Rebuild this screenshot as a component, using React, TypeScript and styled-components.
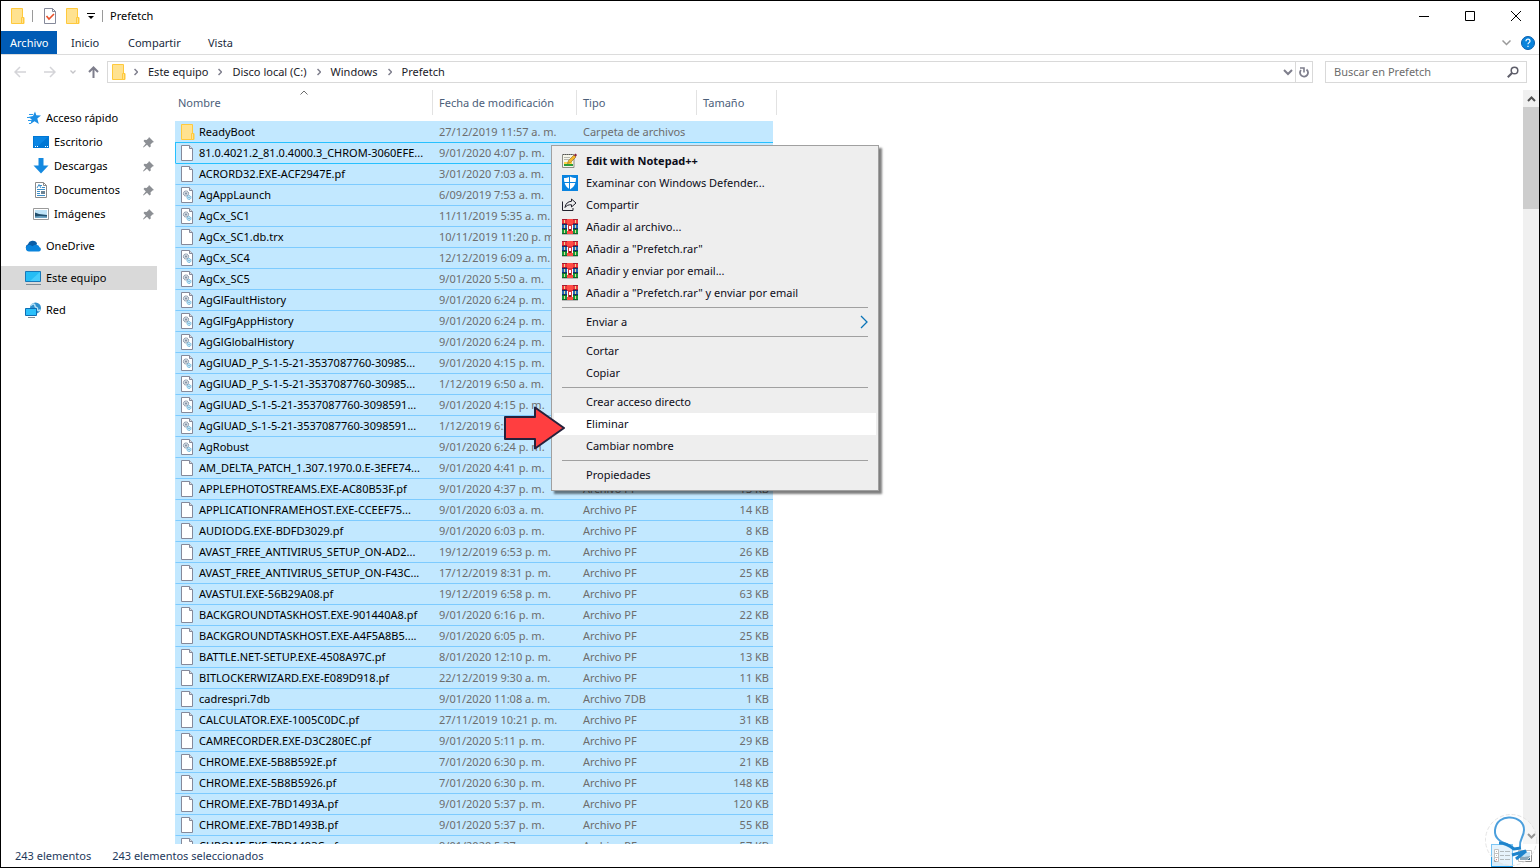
import React from "react";
import styled, { createGlobalStyle } from "styled-components";

const GlobalStyle = createGlobalStyle`
  * { box-sizing: border-box; }
  body { margin: 0; background: #fff; }
  body, button, input, table {
    font-family: "Noto Sans", "Open Sans", sans-serif;
    font-size: 11px;
    line-height: 16px;
  }
  button { border: 0; padding: 0; background: none; color: inherit; text-align: left; }
  a { color: inherit; text-decoration: none; }
  svg { display: block; flex: none; }
`;

const Window = styled.div`
  position: relative;
  display: flex;
  flex-direction: column;
  height: 100vh;
  border: 1px solid #000;
  overflow: hidden;
  color: #000;
`;

/* ---------- title bar ---------- */
const TitleBar = styled.header`
  display: flex;
  align-items: center;
  height: 30px;
  flex: none;
  padding-left: 10px;
`;
const QuickTools = styled.div`
  display: flex;
  align-items: center;
`;
const ToolDivider = styled.span`
  width: 1px;
  height: 12px;
  margin: 0 7px;
  background: #9a9a9a;
`;
const ToolButton = styled.button<{ $before?: number; $after?: number }>`
  display: flex;
  margin-left: ${(p) => p.$before ?? 0}px;
  margin-right: ${(p) => p.$after ?? 0}px;
`;
const Title = styled.h1`
  margin: 0;
  flex: 1;
  font-size: 11px;
  font-weight: 400;
`;
const WindowButton = styled.button`
  display: grid;
  place-items: center;
  width: 46px;
  height: 30px;
`;

/* ---------- ribbon tabs ---------- */
const TabBar = styled.nav`
  display: flex;
  align-items: stretch;
  height: 24px;
  flex: none;
  border-bottom: 1px solid #dcdcdc;
  padding-right: 4px;
`;
const Tab = styled.button<{ $active?: boolean; $width: number }>`
  width: ${(p) => p.$width}px;
  padding-left: ${(p) => (p.$active ? 9 : 14)}px;
  background: ${(p) => (p.$active ? "#005bb5" : "transparent")};
  color: ${(p) => (p.$active ? "#fff" : "#202a3c")};
`;
const TabTools = styled.div`
  display: flex;
  align-items: center;
  gap: 10px;
  margin-left: auto;
`;

/* ---------- address row ---------- */
const AddressRow = styled.div`
  display: flex;
  align-items: center;
  gap: 12px;
  height: 34px;
  margin-bottom: 1px;
  flex: none;
  padding: 0 12px 0 13px;
`;
const NavButtons = styled.div`
  display: flex;
  align-items: center;
  width: 81px;
`;
const NavButton = styled.button<{ $gap?: number }>`
  display: flex;
  margin-right: ${(p) => p.$gap ?? 0}px;
`;
const AddressBox = styled.div`
  display: flex;
  align-items: center;
  flex: 1;
  height: 22px;
  border: 1px solid #d9d9d9;
  padding-left: 4px;
`;
const Crumbs = styled.ol`
  display: flex;
  align-items: center;
  flex: 1;
  margin: 0;
  padding: 0 0 0 8px;
  list-style: none;
`;
const Crumb = styled.li`
  display: flex;
  align-items: center;
  color: #1a1a28;
  svg { margin: 0 10px; }
  &:first-child svg { margin-left: 0; }
`;
const RefreshButton = styled.button`
  display: grid;
  place-items: center;
  width: 17px;
  height: 20px;
  margin-left: 2px;
  border-left: 1px solid #d9d9d9;
`;
const SearchBox = styled.label`
  display: flex;
  align-items: center;
  width: 202px;
  height: 22px;
  border: 1px solid #d9d9d9;
  padding: 0 7px 0 8px;
`;
const SearchInput = styled.input`
  flex: 1;
  min-width: 0;
  height: 16px;
  border: 0;
  padding: 0;
  outline: 0;
  background: none;
  &::placeholder { color: #6d6d6d; opacity: 1; }
`;

/* ---------- body ---------- */
const Body = styled.main`
  display: flex;
  flex: 1;
  min-height: 0;
  overflow: hidden;
`;
const Sidebar = styled.nav`
  width: 174px;
  flex: none;
  padding: 16px 18px 0 0;
`;
const SideGroup = styled.ul`
  margin: 0 0 8px;
  padding: 0;
  list-style: none;
`;
const SideLink = styled.a<{ $nested?: boolean; $selected?: boolean }>`
  display: flex;
  align-items: center;
  height: 24px;
  padding: 0 3px 0 ${(p) => (p.$nested ? 32 : 24)}px;
  background: ${(p) => (p.$selected ? "#d9d9d9" : "transparent")};
`;
const SideIcon = styled.span`
  width: 21px;
`;
const SideLabel = styled.span`
  flex: 1;
`;

const FilePane = styled.section`
  flex: 1;
  min-width: 0;
  overflow: hidden;
`;
const FileTable = styled.table`
  width: 602px;
  table-layout: fixed;
  border-spacing: 0;
`;
const HeadCell = styled.th`
  position: relative;
  padding: 0 0 6px;
  font-weight: 400;
  text-align: left;
  color: #4c607a;
`;
const HeadButton = styled.button<{ $first?: boolean }>`
  display: block;
  width: 100%;
  height: 25px;
  padding-left: ${(p) => (p.$first ? 3 : 6)}px;
  border-right: 1px solid #e2e2e2;
`;
const SortMark = styled.span`
  position: absolute;
  top: 0;
  left: 50%;
  transform: translateX(-50%);
`;
const Row = styled.tr<{ $focus?: boolean; $afterFocus?: boolean; $plain?: boolean }>`
  td {
    border-top: 1px solid
      ${(p) => (p.$focus || p.$afterFocus ? "#26c0ff" : p.$plain ? "#c2e8ff" : "#7dcbff")};
  }
  td:first-child { border-left: 1px solid ${(p) => (p.$focus ? "#26c0ff" : "#c2e8ff")}; }
`;
const Cell = styled.td<{ $right?: boolean }>`
  height: 21px;
  padding: ${(p) => (p.$right ? "0 4px 0 0" : "0 0 0 6px")};
  background: #c2e8ff;
  color: #6d6d6d;
  line-height: 20px;
  white-space: nowrap;
  text-align: ${(p) => (p.$right ? "right" : "left")};
`;
const NameCell = styled(Cell)`
  padding-left: 5px;
  color: #000;
`;
const FileName = styled.div`
  display: grid;
  grid-template-columns: 18px 1fr;
  align-items: center;
  height: 20px;
`;

const ScrollTrack = styled.div`
  display: flex;
  flex-direction: column;
  width: 16px;
  flex: none;
  background: #f0f0f0;
`;
const ScrollButton = styled.button`
  display: grid;
  place-items: center;
  height: 17px;
  flex: none;
`;
const ScrollThumb = styled.div`
  height: 102px;
  background: #cdcdcd;
`;
const ScrollSpace = styled.div`
  flex: 1;
`;

const StatusBar = styled.footer`
  display: flex;
  align-items: center;
  gap: 21px;
  height: 23px;
  flex: none;
  padding: 0 7px 0 14px;
  color: #1e395b;
`;
const ViewButtons = styled.div`
  display: flex;
  align-items: center;
  gap: 4px;
  height: 23px;
  margin-left: auto;
`;
const ViewButton = styled.button<{ $active?: boolean }>`
  display: grid;
  place-items: center;
  width: ${(p) => (p.$active ? 22 : 15)}px;
  height: 23px;
  background: ${(p) => (p.$active ? "#d5ecfa" : "transparent")};
  box-shadow: ${(p) => (p.$active ? "inset 0 0 0 1px #26a0ee" : "none")};
`;

/* ---------- overlays ---------- */
const Menu = styled.div`
  position: absolute;
  top: 144px;
  left: 550px;
  width: 328px;
  padding: 4px 2px;
  border: 1px solid #a0a0a0;
  background: #eee;
  box-shadow: 3px 3px 2px rgba(0, 0, 0, 0.5);
`;
const MenuItem = styled.button<{ $bold?: boolean; $hot?: boolean }>`
  display: grid;
  grid-template-columns: 24px 1fr auto;
  align-items: center;
  width: 100%;
  height: 22px;
  padding: 0 8px;
  background: ${(p) => (p.$hot ? "#fff" : "transparent")};
  font-weight: ${(p) => (p.$bold ? 700 : 400)};
  color: #0c0c18;
`;
const MenuLine = styled.hr`
  height: 1px;
  margin: 3px 8px;
  border: 0;
  background: #a0a0a0;
`;
const Pointer = styled.div`
  position: absolute;
  top: 404px;
  left: 501px;
`;
const Mascot = styled.div`
  position: absolute;
  right: 2px;
  bottom: 0;
`;

/* ---------- icons ---------- */
const FolderIcon = () => (
  <svg width="14" height="16" viewBox="0 0 14 16">
    <path d="M.5.5h11v9h1.500v6H.5z" fill="#ffe290" stroke="#ffc93c" />
    <path d="M10.500 9.500h2v6h-2z" fill="#ffe290" stroke="#ffc93c" />
  </svg>
);
const PageIcon = ({ gears }: { gears?: boolean }) => (
  <svg width="12" height="16" viewBox="0 0 12 16">
    <path d="M.5.5h8l3 3v12H.5z" fill="#fff" stroke="#85899a" />
    <path d="M8.500.5v3h3" fill="#d8dbe2" stroke="#85899a" />
    {gears && (
      <>
        <circle cx="5" cy="6.500" r="2.600" fill="#d3dae2" stroke="#76869a" strokeDasharray="1.200 .4" />
        <circle cx="5" cy="6.500" r="1" fill="#7e8da0" />
        <circle cx="8" cy="10.500" r="2" fill="#cdeaf8" stroke="#5cb0dc" strokeDasharray="1.200 .4" />
        <circle cx="8" cy="10.500" r=".7" fill="#5c9cc4" />
      </>
    )}
  </svg>
);
const Chevron = ({ d, w, h, c, s = 1 }: { d: string; w: number; h: number; c: string; s?: number }) => (
  <svg width={w} height={h} viewBox={`0 0 ${w} ${h}`}>
    <path d={d} fill="none" stroke={c} strokeWidth={s} />
  </svg>
);
const CheckPageIcon = () => (
  <svg width="12" height="16" viewBox="0 0 12 16">
    <path d="M.5.5h8l3 3v12H.5z" fill="#fff" stroke="#85899a" />
    <path d="M8.500.5v3h3" fill="none" stroke="#85899a" />
    <path d="M2.500 8l2.500 3 5-5" fill="none" stroke="#e8502a" strokeWidth="1.600" />
  </svg>
);
const StarIcon = () => (
  <svg width="17" height="16" viewBox="0 0 17 16">
    <path d="M10 1.500l1.300 3.800 4.700.2-3.700 3 1.500 5.500-4.300-2.700L5.500 14l1.200-4.500L3.500 7 8 6z" fill="#1c8ee4" />
    <path d="M4 4.500h4M2 7.500h4M3 10.500h4M4 13.500h2" stroke="#2c9cec" />
  </svg>
);
const DesktopIcon = () => (
  <svg width="16" height="14" viewBox="0 0 16 14">
    <path d="M0 1h16v12H0z" fill="#0077d4" />
    <path d="M1 2h14L5 11H1z" fill="#0a86e4" />
    <path d="M2 11.500h1M4 11.500h1M12 11.500h1M14 11.500h1" stroke="#fff" />
  </svg>
);
const DownloadIcon = () => (
  <svg width="16" height="16" viewBox="0 0 16 16">
    <path d="M5.500 0h5v7.500h5L8 15.500.5 7.500h5z" fill="#1489e0" />
  </svg>
);
const DocumentIcon = () => (
  <svg width="16" height="16" viewBox="0 0 16 16">
    <path d="M2.500.5h8l3 3v12h-11z" fill="#fff" stroke="#8a8a8a" />
    <path d="M10.500.5v3h3" fill="none" stroke="#8a8a8a" />
    <path d="M4 6l2-3.500L8 6M7 3.500h2M9 5.500h3M4 7.500h8M4 9.500h3M4 11.500h3M4 13.500h8" fill="none" stroke="#3b8ec9" />
    <path d="M8 9h4v3H8z" fill="#6d8494" />
  </svg>
);
const PictureIcon = () => (
  <svg width="16" height="14" viewBox="0 0 16 14">
    <path d="M.5 1.500h15v11H.5z" fill="#fff" stroke="#9a9a9a" />
    <path d="M2 3h12v8H2z" fill="#bfe4f8" />
    <path d="M2 5.500l4 1.500 8 1v3H2z" fill="#22506e" />
    <path d="M2 9.500l5-.5 7 .5V11H2z" fill="#6fa5c4" />
  </svg>
);
const CloudIcon = () => (
  <svg width="17" height="12" viewBox="0 0 17 12">
    <path d="M3.500 11A3.500 3.500 0 013 4.300 5 5 0 0112 3l-2 8z" fill="#0a5ea8" />
    <path d="M4 11.500a3.300 3.300 0 01-.5-6.500c1.500-.3 2.800.3 4 1.300C9 5 10 4.600 11.500 4.700a3.500 3.500 0 013 2.600 2.200 2.200 0 01-.3 4.200z" fill="#0a84dc" />
  </svg>
);
const ComputerIcon = () => (
  <svg width="17" height="16" viewBox="0 0 17 16">
    <path d="M.5 1.500h15v10H.5z" fill="#25bdf5" stroke="#1878b8" />
    <path d="M15 2v9H5z" fill="#45cdfc" />
    <path d="M1 14.500h15" stroke="#7e8a94" />
  </svg>
);
const NetworkIcon = () => (
  <svg width="17" height="16" viewBox="0 0 17 16">
    <circle cx="10.500" cy="6" r="5.500" fill="#2f8fcc" />
    <path d="M6 3.500C8 1 10 2 10 4s3 1 2.500 3 2 2 2.500.5" fill="none" stroke="#b8e2f6" strokeWidth="1.600" />
    <path d="M.5 6.500h11v7H.5z" fill="#2bc0fa" stroke="#0d6db4" />
    <path d="M3 15.500h7" stroke="#7e8a94" />
  </svg>
);
const PinIcon = () => (
  <svg width="11" height="11" viewBox="0 0 11 11">
    <path d="M6 0l5 5-1.500.5-2 2 .3 2L6.500 10.500 4 7.800.5 10.500 0 10l2.800-3.500L.5 4l1-1.200 2 .3 2-1.800z" fill="#8c8f94" />
  </svg>
);
const NotepadIcon = () => (
  <svg width="16" height="16" viewBox="0 0 16 16">
    <path d="M.5 1.500h11.500v13H.5z" fill="#f6f6ea" stroke="#8c8c84" />
    <path d="M1 1.500h10" stroke="#555" strokeDasharray="1 1" />
    <path d="M2 4.500h6M2 6.500h5" stroke="#b8b8b0" />
    <path d="M2 9h8v2H2z" fill="#ffd34a" />
    <path d="M2 11h9v2H2z" fill="#2d9c3a" />
    <path d="M5.500 10.500l1-3L12 2l2 2L8.500 9.500z" fill="#f4b52c" stroke="#8a6a1c" strokeWidth=".6" />
    <path d="M12 2L13.500.5 15 2l-1.300 1.800z" fill="#8c2440" />
  </svg>
);
const DefenderIcon = () => (
  <svg width="16" height="16" viewBox="0 0 16 16">
    <path d="M0 0h16v16H0z" fill="#0a84e0" />
    <path d="M8 1.500c2 1.300 4 1.600 6 1.600 0 5-1.300 8.800-6 11.400C3.300 11.900 2 8.100 2 3.100c2 0 4-.3 6-1.600z" fill="#fff" />
    <path d="M7.500 1v14M2 7.500h12" stroke="#0a84e0" />
  </svg>
);
const ShareIcon = () => (
  <svg width="16" height="14" viewBox="0 0 16 14">
    <path d="M.5 3.500v9h10.500v-2.500" fill="none" stroke="#20202c" />
    <path d="M9.500 1L14 5 9.500 9V6.800C6.500 6.500 4.500 7.500 3 9.500 3.500 5.500 6 3.500 9.500 3.300z" fill="none" stroke="#20202c" />
  </svg>
);
const RarIcon = () => (
  <svg width="16" height="16" viewBox="0 0 16 16" shapeRendering="crispEdges">
    <path d="M0 0h16v5H0z" fill="#a81c30" />
    <path d="M0 1h16v3H0z" fill="#f0363c" />
    <path d="M0 5h16v5H0z" fill="#10306e" />
    <path d="M0 6h16v3H0z" fill="#2468b4" />
    <path d="M0 10h16v5H0z" fill="#0c6a28" />
    <path d="M0 11h16v3H0z" fill="#149a3a" />
    <path d="M0 15.500h16" stroke="#b8b8b8" />
    <path d="M2.500 1v3M2.500 6v3M2.500 11v3M13.500 1v3M13.500 6v3M13.500 11v3" stroke="#e8d890" />
    <path d="M5 0h6v5H5zM5 12h6v3H5z" fill="#ff4a44" />
    <path d="M5 5h6v7H5z" fill="#d8323a" />
    <path d="M5.500 6v6M10.500 6v6" stroke="#fff" />
    <path d="M7 7h2v3H7z" fill="#fff" />
    <path d="M7 10h2v2H7z" fill="#7a2020" />
  </svg>
);

/* ---------- data ---------- */
type Entry = [name: string, date: string, type?: string, size?: string];
const PF = "Archivo PF";
const files: Entry[] = [
  ["ReadyBoot", "27/12/2019 11:57 a. m.", "Carpeta de archivos"],
  ["81.0.4021.2_81.0.4000.3_CHROM-3060EFE...", "9/01/2020 4:07 p. m."],
  ["ACRORD32.EXE-ACF2947E.pf", "3/01/2020 7:03 a. m."],
  ["AgAppLaunch", "6/09/2019 7:53 a. m."],
  ["AgCx_SC1", "11/11/2019 5:35 a. m."],
  ["AgCx_SC1.db.trx", "10/11/2019 11:20 p. m."],
  ["AgCx_SC4", "12/12/2019 6:09 a. m."],
  ["AgCx_SC5", "9/01/2020 5:50 a. m."],
  ["AgGlFaultHistory", "9/01/2020 6:24 p. m."],
  ["AgGlFgAppHistory", "9/01/2020 6:24 p. m."],
  ["AgGlGlobalHistory", "9/01/2020 6:24 p. m."],
  ["AgGlUAD_P_S-1-5-21-3537087760-30985...", "9/01/2020 4:15 p. m."],
  ["AgGlUAD_P_S-1-5-21-3537087760-30985...", "1/12/2019 6:50 a. m."],
  ["AgGlUAD_S-1-5-21-3537087760-3098591...", "9/01/2020 4:15 p. m."],
  ["AgGlUAD_S-1-5-21-3537087760-3098591...", "1/12/2019 6:50 a. m."],
  ["AgRobust", "9/01/2020 6:24 p. m."],
  ["AM_DELTA_PATCH_1.307.1970.0.E-3EFE74...", "9/01/2020 4:41 p. m."],
  ["APPLEPHOTOSTREAMS.EXE-AC80B53F.pf", "9/01/2020 4:37 p. m.", PF, "13 KB"],
  ["APPLICATIONFRAMEHOST.EXE-CCEEF75...", "9/01/2020 6:03 a. m.", PF, "14 KB"],
  ["AUDIODG.EXE-BDFD3029.pf", "9/01/2020 6:03 p. m.", PF, "8 KB"],
  ["AVAST_FREE_ANTIVIRUS_SETUP_ON-AD2...", "19/12/2019 6:53 p. m.", PF, "26 KB"],
  ["AVAST_FREE_ANTIVIRUS_SETUP_ON-F43C...", "17/12/2019 8:31 p. m.", PF, "25 KB"],
  ["AVASTUI.EXE-56B29A08.pf", "19/12/2019 6:58 p. m.", PF, "63 KB"],
  ["BACKGROUNDTASKHOST.EXE-901440A8.pf", "9/01/2020 6:16 p. m.", PF, "22 KB"],
  ["BACKGROUNDTASKHOST.EXE-A4F5A8B5....", "9/01/2020 6:05 p. m.", PF, "25 KB"],
  ["BATTLE.NET-SETUP.EXE-4508A97C.pf", "8/01/2020 12:10 p. m.", PF, "13 KB"],
  ["BITLOCKERWIZARD.EXE-E089D918.pf", "22/12/2019 9:30 a. m.", PF, "11 KB"],
  ["cadrespri.7db", "9/01/2020 11:08 a. m.", "Archivo 7DB", "1 KB"],
  ["CALCULATOR.EXE-1005C0DC.pf", "27/11/2019 10:21 p. m.", PF, "31 KB"],
  ["CAMRECORDER.EXE-D3C280EC.pf", "9/01/2020 5:11 p. m.", PF, "29 KB"],
  ["CHROME.EXE-5B8B592E.pf", "7/01/2020 6:30 p. m.", PF, "21 KB"],
  ["CHROME.EXE-5B8B5926.pf", "7/01/2020 6:30 p. m.", PF, "148 KB"],
  ["CHROME.EXE-7BD1493A.pf", "9/01/2020 5:37 p. m.", PF, "120 KB"],
  ["CHROME.EXE-7BD1493B.pf", "9/01/2020 5:37 p. m.", PF, "55 KB"],
  ["CHROME.EXE-7BD1493C.pf", "9/01/2020 5:37 p. m.", PF, "57 KB"],
];

const sideGroups = [
  [
    { label: "Acceso rápido", icon: <StarIcon /> },
    { label: "Escritorio", icon: <DesktopIcon />, nested: true },
    { label: "Descargas", icon: <DownloadIcon />, nested: true },
    { label: "Documentos", icon: <DocumentIcon />, nested: true },
    { label: "Imágenes", icon: <PictureIcon />, nested: true },
  ],
  [{ label: "OneDrive", icon: <CloudIcon /> }],
  [{ label: "Este equipo", icon: <ComputerIcon />, selected: true }],
  [{ label: "Red", icon: <NetworkIcon /> }],
] as { label: string; icon: React.ReactNode; nested?: boolean; selected?: boolean }[][];

const menuGroups: { label: string; icon?: React.ReactNode; bold?: boolean; hot?: boolean; sub?: boolean }[][] = [
  [
    { label: "Edit with Notepad++", icon: <NotepadIcon />, bold: true },
    { label: "Examinar con Windows Defender...", icon: <DefenderIcon /> },
    { label: "Compartir", icon: <ShareIcon /> },
    { label: "Añadir al archivo...", icon: <RarIcon /> },
    { label: 'Añadir a "Prefetch.rar"', icon: <RarIcon /> },
    { label: "Añadir y enviar por email...", icon: <RarIcon /> },
    { label: 'Añadir a "Prefetch.rar" y enviar por email', icon: <RarIcon /> },
  ],
  [{ label: "Enviar a", sub: true }],
  [{ label: "Cortar" }, { label: "Copiar" }],
  [{ label: "Crear acceso directo" }, { label: "Eliminar", hot: true }, { label: "Cambiar nombre" }],
  [{ label: "Propiedades" }],
];

const hasGears = (name: string) => name.startsWith("Ag") && !name.endsWith(".trx");

export default function App() {
  return (
    <Window>
      <GlobalStyle />
      <TitleBar>
        <QuickTools>
          <FolderIcon />
          <ToolDivider />
          <ToolButton $before={4} $after={10} aria-label="Propiedades"><CheckPageIcon /></ToolButton>
          <ToolButton $after={7} aria-label="Nueva carpeta"><FolderIcon /></ToolButton>
          <ToolButton aria-label="Personalizar">
            <svg width="8" height="6" viewBox="0 0 8 6">
              <path d="M0 .5h8" stroke="#000" />
              <path d="M1 3h6L4 6z" />
            </svg>
          </ToolButton>
          <ToolDivider />
        </QuickTools>
        <Title>Prefetch</Title>
        <WindowButton aria-label="Minimizar">
          <svg width="10" height="10"><path d="M0 5.500h10" stroke="#000" /></svg>
        </WindowButton>
        <WindowButton aria-label="Maximizar">
          <svg width="10" height="10"><path d="M.5.5h9v9h-9z" fill="none" stroke="#000" /></svg>
        </WindowButton>
        <WindowButton aria-label="Cerrar">
          <svg width="10" height="10"><path d="M0 0l10 10M10 0L0 10" stroke="#000" /></svg>
        </WindowButton>
      </TitleBar>

      <TabBar>
        <Tab $active $width={56}>Archivo</Tab>
        <Tab $width={57}>Inicio</Tab>
        <Tab $width={80}>Compartir</Tab>
        <Tab $width={55}>Vista</Tab>
        <TabTools>
          <Chevron d="M.5.5L4.500 4.500 8.500.5" w={9} h={6} c="#9a9a9a" s={1.5} />
          <ToolButton aria-label="Ayuda">
            <svg width="14" height="14" viewBox="0 0 14 14">
              <circle cx="7" cy="7" r="6.500" fill="#0a84dc" stroke="#0a5fae" />
              <path d="M5 5.200a2 2 0 114 0c0 1.400-2 1.500-2 3" fill="none" stroke="#fff" strokeWidth="1.200" />
              <path d="M6.400 9.700h1.200v1.200H6.400z" fill="#fff" />
            </svg>
          </ToolButton>
        </TabTools>
      </TabBar>

      <AddressRow>
        <NavButtons>
          <NavButton $gap={18} aria-label="Atrás">
            <Chevron d="M12 6H1M6 1L1 6l5 5" w={12} h={12} c="#d4d4d8" s={1.5} />
          </NavButton>
          <NavButton $gap={14} aria-label="Adelante">
            <Chevron d="M0 6h11M6 1l5 5-5 5" w={12} h={12} c="#d4d4d8" s={1.5} />
          </NavButton>
          <NavButton $gap={12} aria-label="Recientes">
            <Chevron d="M.5.5L3 3 5.500.5" w={6} h={4} c="#c4c4c8" s={1.3} />
          </NavButton>
          <NavButton aria-label="Arriba">
            <Chevron d="M5.500 12V1.500M1 6l4.500-4.500L10 6" w={11} h={12} c="#7e7e8c" s={2} />
          </NavButton>
        </NavButtons>
        <AddressBox>
          <FolderIcon />
          <Crumbs>
            {["Este equipo", "Disco local (C:)", "Windows", "Prefetch"].map((c) => (
              <Crumb key={c}>
                <Chevron d="M.5 1L3.500 4 .5 7" w={4} h={8} c="#7e7e8c" s={1.5} />
                <a href="#">{c}</a>
              </Crumb>
            ))}
          </Crumbs>
          <Chevron d="M1 1l4 4 4-4" w={10} h={7} c="#7e7e8c" s={2} />
          <RefreshButton aria-label="Actualizar">
            <svg width="10" height="11" viewBox="0 0 10 11">
              <path d="M7.500 2.500A4 4 0 112 3" fill="none" stroke="#7e7e8c" strokeWidth="1.800" />
              <path d="M1 1h4v4.500" fill="none" stroke="#7e7e8c" strokeWidth="1.600" />
            </svg>
          </RefreshButton>
        </AddressBox>
        <SearchBox>
          <SearchInput type="text" aria-label="Buscar" placeholder="Buscar en Prefetch" />
          <svg width="12" height="12" viewBox="0 0 12 12">
            <circle cx="7.500" cy="4.500" r="3.300" fill="none" stroke="#5e5e6a" strokeWidth="1.500" />
            <path d="M5 7L.8 11.200" stroke="#5e5e6a" strokeWidth="2" />
          </svg>
        </SearchBox>
      </AddressRow>

      <Body>
        <Sidebar>
          {sideGroups.map((group, i) => (
            <SideGroup key={i}>
              {group.map((item) => (
                <li key={item.label}>
                  <SideLink href="#" $nested={item.nested} $selected={item.selected}>
                    <SideIcon>{item.icon}</SideIcon>
                    <SideLabel>{item.label}</SideLabel>
                    {item.nested && <PinIcon />}
                  </SideLink>
                </li>
              ))}
            </SideGroup>
          ))}
        </Sidebar>

        <FilePane>
          <FileTable>
            <colgroup>
              <col width={258} />
              <col width={144} />
              <col width={120} />
              <col width={76} />
              <col width={4} />
            </colgroup>
            <thead>
              <tr>
                <HeadCell>
                  <HeadButton $first>Nombre</HeadButton>
                  <SortMark>
                    <Chevron d="M.5 4.500l3.500-3.500 3.500 3.500" w={8} h={5} c="#6d6d6d" />
                  </SortMark>
                </HeadCell>
                <HeadCell><HeadButton>Fecha de modificación</HeadButton></HeadCell>
                <HeadCell><HeadButton>Tipo</HeadButton></HeadCell>
                <HeadCell colSpan={2}><HeadButton>Tamaño</HeadButton></HeadCell>
              </tr>
            </thead>
            <tbody>
              {files.map(([name, date, type, size], i) => (
                <Row key={i} $plain={i === 0} $focus={i === 1} $afterFocus={i === 2}>
                  <NameCell>
                    <FileName>
                      {i === 0 ? <FolderIcon /> : <PageIcon gears={hasGears(name)} />}
                      <span>{name}</span>
                    </FileName>
                  </NameCell>
                  <Cell>{date}</Cell>
                  <Cell>{type}</Cell>
                  <Cell $right>{size}</Cell>
                </Row>
              ))}
            </tbody>
          </FileTable>
        </FilePane>

        <ScrollTrack>
          <ScrollButton aria-label="Subir">
            <Chevron d="M1 5l3.500-3.500L8 5" w={9} h={6} c="#505050" s={2} />
          </ScrollButton>
          <ScrollThumb />
          <ScrollSpace />
          <ScrollButton aria-label="Bajar">
            <Chevron d="M1 1l3.500 3.500L8 1" w={9} h={6} c="#505050" s={2} />
          </ScrollButton>
        </ScrollTrack>
      </Body>

      <StatusBar>
        <span>243 elementos</span>
        <span>243 elementos seleccionados</span>
        <ViewButtons>
          <ViewButton $active aria-label="Detalles">
            <svg width="16" height="14" viewBox="0 0 16 14">
              <path d="M.5.5h4v12h-4zM.5 4.500h4M.5 8.500h4" fill="#fff" stroke="#9a9a9a" />
              <path d="M2 2.500h1M2 6.500h1" stroke="#888" />
              <path d="M2 10.500h1" stroke="#c03030" />
              <path d="M6 2.500h4M11 2.500h5M6 6.500h4M11 6.500h5M6 10.500h4M11 10.500h5" stroke="#7d8a92" />
            </svg>
          </ViewButton>
          <ViewButton aria-label="Iconos grandes">
            <svg width="14" height="12" viewBox="0 0 14 12">
              <path d="M.5.5h13v11H.5z" fill="#fff" stroke="#8e8e8e" />
              <path d="M2 2h10v8H2z" fill="#9fd0ee" />
              <path d="M2 6l4 1 6-1v4H2z" fill="#3e6f8c" />
            </svg>
          </ViewButton>
        </ViewButtons>
      </StatusBar>

      <Mascot>
        <svg width="52" height="54" viewBox="0 0 52 54">
          <circle cx="26" cy="27" r="25.500" fill="#fff" fillOpacity=".4" stroke="#e4e4e4" strokeDasharray="4 2" />
          <path
            d="M27 34C22 30 9 29 10 17 11 8 18 4 25 4.500 34 5 39 10 39 17c0 7-5 9-4 17"
            fill="none"
            stroke="#4c9fdc"
            strokeWidth="2"
          />
          <path d="M14 30c5 0 10 2 15 6l7-1M27 42l14-4-10 8" fill="none" stroke="#1e84cc" strokeWidth="3" />
        </svg>
      </Mascot>

      <Menu role="menu">
        {menuGroups.map((group, i) => (
          <React.Fragment key={i}>
            {i > 0 && <MenuLine />}
            {group.map((item) => (
              <MenuItem key={item.label} role="menuitem" $bold={item.bold} $hot={item.hot}>
                <span>{item.icon}</span>
                <span>{item.label}</span>
                {item.sub && <Chevron d="M1 1l6 6-6 6" w={8} h={14} c="#0a74b8" s={1.3} />}
              </MenuItem>
            ))}
          </React.Fragment>
        ))}
      </Menu>

      <Pointer>
        <svg width="64" height="46" viewBox="0 0 64 46">
          <path
            d="M3 12h30V2.500L62 23 33 43.500V34H3z"
            fill="#ff3e40"
            stroke="#26223c"
            strokeWidth="2"
            strokeLinejoin="round"
          />
        </svg>
      </Pointer>
    </Window>
  );
}
